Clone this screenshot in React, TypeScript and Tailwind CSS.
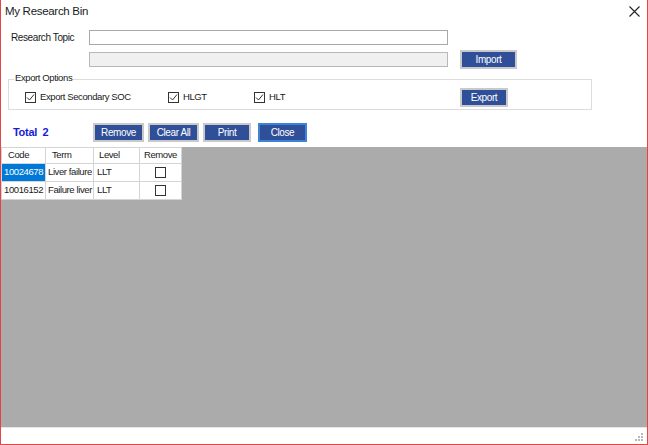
import React from "react";

const font = { fontFamily: '"Liberation Sans", Arial, sans-serif' };

function Btn({ label, w, focus }: { label: string; w: string; focus?: boolean }) {
  return (
    <button
      className={`${w} h-[19px] flex items-center justify-center bg-[#2f4f98] text-white text-[10px] tracking-[-0.4px] leading-none border-2 ${
        focus ? "border-[#3d84d8]" : "border-[#c9c9c9]"
      }`}
    >
      {label}
    </button>
  );
}

function Check({ checked }: { checked?: boolean }) {
  return (
    <span className="w-[11px] h-[11px] border border-[#333] bg-white flex items-center justify-center shrink-0">
      {checked && (
        <svg width="9" height="9" viewBox="0 0 9 9">
          <path d="M1 4.5 L3.5 7 L8 1.5" fill="none" stroke="#333" strokeWidth="1" />
        </svg>
      )}
    </span>
  );
}

const rows = [
  { code: "10024678", term: "Liver failure", level: "LLT", sel: true },
  { code: "10016152", term: "Failure liver", level: "LLT", sel: false },
];

export default function App() {
  return (
    <div
      className="w-[648px] h-[445px] bg-white border-x border-b border-[#e04848] flex flex-col text-[9.5px] tracking-[-0.4px] text-[#1a1a1a] overflow-hidden"
      style={font}
    >
      {/* title bar */}
      <div className="h-[22px] flex items-center justify-between pl-[4px] pr-[7px] shrink-0">
        <span className="text-[11.5px] tracking-[-0.3px] pt-[1px]">My Research Bin</span>
        <svg width="11" height="11" viewBox="0 0 11 11">
          <path d="M0.5 0.5 L10.5 10.5 M10.5 0.5 L0.5 10.5" stroke="#222" strokeWidth="1.1" />
        </svg>
      </div>

      {/* research topic */}
      <div className="flex items-center h-[15px] mt-[8px] shrink-0">
        <span className="w-[88px] pl-[10px] text-[10px]">Research Topic</span>
        <div className="w-[359px] h-[15px] border border-[#a8a8a8] bg-white" />
      </div>
      <div className="flex items-center h-[19px] mt-[5px] shrink-0">
        <div className="w-[88px]" />
        <div className="w-[359px] h-[15px] border border-[#b8b8b8] bg-[#f0f0f0]" />
        <div className="w-[12px]" />
        <Btn label="Import" w="w-[57px]" />
      </div>

      {/* export options */}
      <div className="relative ml-[7px] w-[584px] h-[31px] mt-[10px] border border-[#dcdcdc] shrink-0 flex items-center">
        <span className="absolute -top-[7px] left-[5px] bg-white px-[1px] leading-none">Export Options</span>
        <div className="flex items-center pl-[16px] pt-[6px] h-full">
          <div className="flex items-center gap-[4px] w-[143px]">
            <Check checked />
            <span>Export Secondary SOC</span>
          </div>
          <div className="flex items-center gap-[4px] w-[86px]">
            <Check checked />
            <span>HLGT</span>
          </div>
          <div className="flex items-center gap-[4px] w-[206px]">
            <Check checked />
            <span>HLT</span>
          </div>
        </div>
        <div className="pt-[6px]">
          <Btn label="Export" w="w-[48px]" />
        </div>
      </div>

      {/* total + actions */}
      <div className="flex items-center h-[19px] mt-[13px] shrink-0">
        <span className="w-[92px] pl-[12px] text-[#1a1ad6] font-bold text-[11px] tracking-[-0.3px]">Total&nbsp;&nbsp;2</span>
        <div className="flex items-center">
          <Btn label="Remove" w="w-[51px]" />
          <div className="w-[4px]" />
          <Btn label="Clear All" w="w-[51px]" />
          <div className="w-[4px]" />
          <Btn label="Print" w="w-[48px]" />
          <div className="w-[7px]" />
          <Btn label="Close" w="w-[49px]" focus />
        </div>
      </div>

      {/* grid */}
      <div className="mt-[5px] flex-1 bg-[#ababab] min-h-0">
        <table className="w-[180px] bg-white border-collapse table-fixed text-[9.5px] tracking-[-0.4px]">
          <colgroup>
            <col className="w-[44px]" />
            <col className="w-[48px]" />
            <col className="w-[46px]" />
            <col className="w-[42px]" />
          </colgroup>
          <thead>
            <tr className="h-[16px]">
              <th className="border border-[#d4d4d4] font-normal text-left pl-[6px] whitespace-nowrap">Code</th>
              <th className="border border-[#d4d4d4] font-normal text-left pl-[6px] whitespace-nowrap">Term</th>
              <th className="border border-[#d4d4d4] font-normal text-left pl-[5px] whitespace-nowrap">Level</th>
              <th className="border border-[#d4d4d4] font-normal text-left pl-[4px] whitespace-nowrap">Remove</th>
            </tr>
          </thead>
          <tbody>
            {rows.map((r) => (
              <tr key={r.code} className="h-[18px]">
                <td
                  className={`border border-[#d4d4d4] pl-[2px] whitespace-nowrap ${
                    r.sel ? "bg-[#0078d7] text-white" : ""
                  }`}
                >
                  {r.code}
                </td>
                <td className="border border-[#d4d4d4] pl-[2px] whitespace-nowrap">{r.term}</td>
                <td className="border border-[#d4d4d4] pl-[3px]">{r.level}</td>
                <td className="border border-[#d4d4d4]">
                  <div className="flex justify-center">
                    <Check />
                  </div>
                </td>
              </tr>
            ))}
          </tbody>
        </table>
      </div>

      {/* status strip */}
      <div className="h-[17px] shrink-0 border-t border-[#e4e4e4] bg-white flex justify-end items-end pr-[3px] pb-[2px]">
        <svg width="10" height="10" viewBox="0 0 10 10">
          {[
            [7, 1],
            [4, 4],
            [7, 4],
            [1, 7],
            [4, 7],
            [7, 7],
          ].map(([x, y], i) => (
            <rect key={i} x={x} y={y} width="2" height="2" fill="#b8b8b8" />
          ))}
        </svg>
      </div>
    </div>
  );
}
